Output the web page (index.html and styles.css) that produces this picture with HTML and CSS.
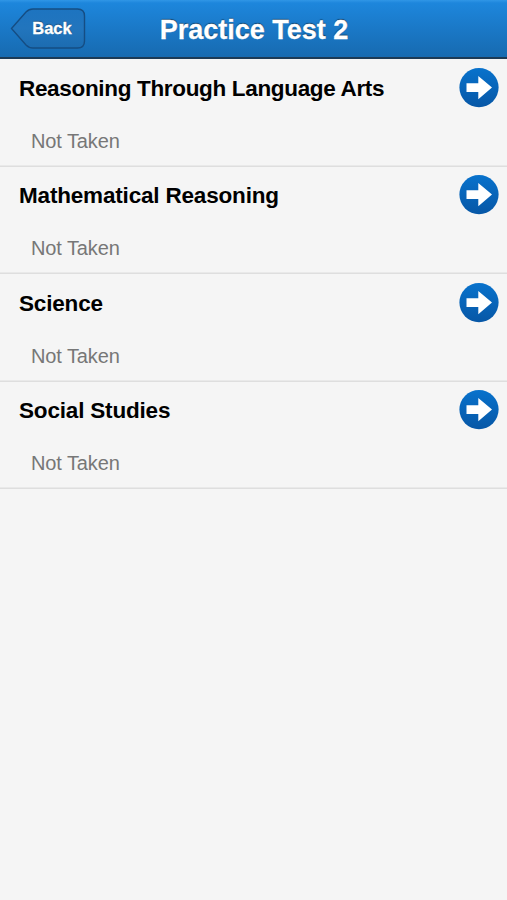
FILE: index.html
```html
<!DOCTYPE html>
<html lang="en">
<head>
<meta charset="utf-8">
<title>Practice Test 2</title>
<link rel="stylesheet" href="styles.css">
</head>
<body>
<svg class="defs" width="0" height="0">
  <defs>
    <linearGradient id="btn" x1="0" y1="0" x2="0" y2="1"><stop offset="0" stop-color="#1d74c0"/><stop offset="0.5" stop-color="#2275bd"/><stop offset="1" stop-color="#1c6cb0"/></linearGradient>
    <linearGradient id="disc" x1="0" y1="0" x2="0" y2="1"><stop offset="0" stop-color="#0872cc"/><stop offset="1" stop-color="#0757a6"/></linearGradient>
    <symbol id="go" viewBox="0 0 40 40">
      <circle cx="20" cy="19.6" r="19.6" fill="url(#disc)"/>
      <path d="M7.500 15.300H19.300V8L33 19.600L19.300 31.200V24H7.500Z" fill="#fff"/>
    </symbol>
  </defs>
</svg>
<header class="bar">
  <a class="back">
    <svg class="back-shape" viewBox="0 0 76 42"><path d="M1.500 20.500L16 4Q19 1 23 1H67.500Q74.500 1 74.500 8V33Q74.500 40 67.500 40H23Q19 40 16 37Z" fill="url(#btn)" stroke="#154d83" stroke-width="1.400"/></svg>
    <span class="back-label">Back</span>
  </a>
  <h1>Practice Test 2</h1>
</header>
<main>
  <section class="row"><div class="head"><h2 class="long">Reasoning Through Language Arts</h2><svg class="go"><use href="#go"/></svg></div><p>Not Taken</p></section>
  <section class="row"><div class="head"><h2>Mathematical Reasoning</h2><svg class="go"><use href="#go"/></svg></div><p>Not Taken</p></section>
  <section class="row"><div class="head"><h2>Science</h2><svg class="go"><use href="#go"/></svg></div><p>Not Taken</p></section>
  <section class="row"><div class="head"><h2>Social Studies</h2><svg class="go"><use href="#go"/></svg></div><p>Not Taken</p></section>
</main>
</body>
</html>
```
FILE: styles.css
```css
* { box-sizing: border-box; }
body { margin: 0; min-height: 900px; background: #f5f5f5; font-family: "Liberation Sans", Arial, sans-serif; color: #000; }
.defs { position: absolute; }
h1, h2, p { margin: 0; }
.bar { display: grid; grid-template-columns: 1fr auto 1fr; align-items: center; height: 59px; background: linear-gradient(#3096e6, #1d86dc 3px, #176ab0); border-bottom: 2px solid #1c3a55; }
.back { position: relative; width: 76px; height: 42px; margin: 1px 0 0 10px; }
.back-shape { display: block; width: 76px; height: 42px; }
.back-label { position: absolute; inset: 0 0 0 8px; text-align: center; line-height: 40px; font-size: 16.5px; font-weight: bold; color: #fff; -webkit-text-stroke: 0.3px #fff; text-shadow: 0 -1px 1px #0006; }
h1 { padding: 3px 0 0 1px; font-size: 27px; line-height: 54px; color: #fff; -webkit-text-stroke: 0.3px #fff; text-shadow: 0 -1.5px 1px #0008; }
.row { height: 107.5px; padding: 9.3px 8px 0 19px; box-shadow: inset 0 -1.5px #dedede; }
.head { display: flex; justify-content: space-between; align-items: center; height: 39px; }
h2 { padding-top: 2px; font-size: 22.5px; letter-spacing: -0.18px; white-space: nowrap; }
h2.long { letter-spacing: -0.33px; }
.go { width: 40px; height: 40px; }
.row p { margin: 21.3px 0 0 12px; font-size: 20px; line-height: 24px; letter-spacing: -0.1px; color: #777; }
```
